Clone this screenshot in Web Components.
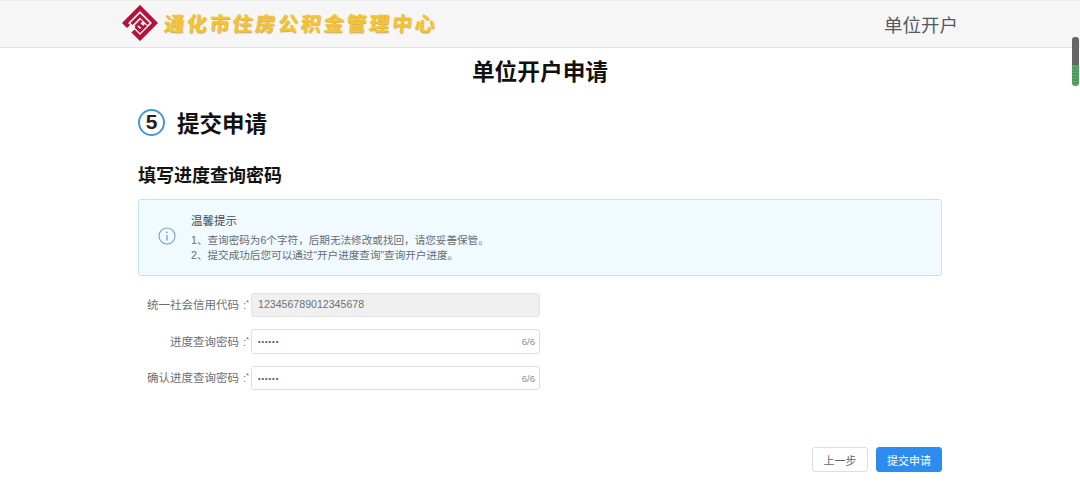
<!DOCTYPE html>
<html lang="zh">
<head>
<meta charset="utf-8">
<title>单位开户申请</title>
<style>
  html, body { margin: 0; height: 487px; overflow: hidden; background: #fff; }
  body { font-family: "Liberation Sans", "Noto Sans CJK SC", sans-serif; color: #17233d; }
</style>
</head>
<body>
<app-header org="通化市住房公积金管理中心" page="单位开户"></app-header>
<page-title>单位开户申请</page-title>
<main-wrap>
  <step-title num="5">提交申请</step-title>
  <section-title>填写进度查询密码</section-title>
  <tip-box heading="温馨提示">
    <div>1、查询密码为6个字符，后期无法修改或找回，请您妥善保管。</div>
    <div>2、提交成功后您可以通过“开户进度查询”查询开户进度。</div>
  </tip-box>
  <form-area>
    <form-row label="统一社会信用代码" value="123456789012345678" disabled></form-row>
    <form-row label="进度查询密码" value="••••••" count="6/6" masked></form-row>
    <form-row label="确认进度查询密码" value="••••••" count="6/6" masked></form-row>
  </form-area>
  <btn-bar>
    <x-btn>上一步</x-btn>
    <x-btn primary>提交申请</x-btn>
  </btn-bar>
</main-wrap>
<fake-scroll></fake-scroll>

<script>
class AppHeader extends HTMLElement {
    constructor() {
        super();
        this.attachShadow({ mode: 'open' });
        this.shadowRoot.innerHTML = `
        <style>
        :host { display: flex; align-items: center; justify-content: space-between; box-sizing: border-box;
            height: 48px; padding: 0 122px; background: #f6f6f6; border-top: 1px solid #ededed; border-bottom: 1px solid #e4e4e4; }
        .brand { display: flex; align-items: center; gap: 6px; margin-top: -2px; }
        .brand svg { display: block; }
        .org { font: 700 20px/1 "Noto Sans CJK SC", sans-serif; letter-spacing: 2.8px; color: #f6c42c;
            text-shadow: 1px 1px 1px #c9a56a; transform: skewX(-6deg); }
        .page { font-size: 18.500px; color: #55595f; }
        </style>
        <div class="brand">
            <svg width="36" height="36" viewBox="0 0 36 36" fill="none" stroke="#b3123c">
                <!-- outer ring, open on the lower left -->
                <path d="M6.500 21.500 L3 18 L18 3 L33 18 L18 33 L11 26" stroke-width="4.400"/>
                <!-- inner chevron and S -->
                <path d="M9.500 19 L18 10.500 L26.500 19" stroke-width="3"/>
                <path d="M13.500 21.500 L19.500 15.500 M13.500 21.500 L18 26 L24 20 M16.500 18.500 L21.500 23" stroke-width="2.800"/>
            </svg>
            <span class="org"></span>
        </div>
        <span class="page"></span>`;
        this.shadowRoot.querySelector('.org').textContent = this.getAttribute('org');
        this.shadowRoot.querySelector('.page').textContent = this.getAttribute('page');
    }
}

class PageTitle extends HTMLElement {
    constructor() {
        super();
        this.attachShadow({ mode: 'open' });
        this.shadowRoot.innerHTML = `
        <style>
        :host { display: block; text-align: center; font-size: 22.700px; line-height: 30px; font-weight: 700; color: #111;
            padding-top: 9px; }
        </style>
        <slot></slot>`;
    }
}

class MainWrap extends HTMLElement {
    constructor() {
        super();
        this.attachShadow({ mode: 'open' });
        this.shadowRoot.innerHTML = `
        <style>
        :host { display: block; width: 804px; margin-left: 138px; }
        </style>
        <slot></slot>`;
    }
}

class StepTitle extends HTMLElement {
    constructor() {
        super();
        this.attachShadow({ mode: 'open' });
        this.shadowRoot.innerHTML = `
        <style>
        :host { display: flex; align-items: center; gap: 12px; margin-top: 20px; height: 30px; font-size: 22.500px; font-weight: 700; color: #111; }
        .num { box-sizing: border-box; width: 27px; height: 27px; border: 2px solid #4a95d6; border-radius: 50%;
            display: flex; align-items: center; justify-content: center; font-size: 21px; font-weight: 700; color: #222; }
        </style>
        <span class="num"></span><slot></slot>`;
        this.shadowRoot.querySelector('.num').textContent = this.getAttribute('num');
    }
}

class SectionTitle extends HTMLElement {
    constructor() {
        super();
        this.attachShadow({ mode: 'open' });
        this.shadowRoot.innerHTML = `
        <style>
        :host { display: block; margin-top: 26px; font-size: 18px; line-height: 26px; font-weight: 700; color: #111; }
        </style>
        <slot></slot>`;
    }
}

class TipBox extends HTMLElement {
    constructor() {
        super();
        this.attachShadow({ mode: 'open' });
        this.shadowRoot.innerHTML = `
        <style>
        :host { display: flex; align-items: center; box-sizing: border-box; height: 77px; margin-top: 10px; padding: 0 0 0 19px;
            background: #f0faff; border: 1px solid #c3e6f5; border-radius: 3px; }
        svg { flex: none; margin-right: 15px; margin-top: -4px; }
        .text { padding-top: 1px; }
        .title { font-size: 11.500px; line-height: 16px; color: #444c58; margin-bottom: 4px; }
        .body { font-size: 10.600px; line-height: 15px; color: #666c75; }
        </style>
        <svg width="18" height="18" viewBox="0 0 18 18" fill="none" stroke="#6f9fdc">
            <circle cx="9" cy="9" r="8" stroke-width="1.100"/>
            <path d="M9 8 V13.500" stroke-width="1.300"/>
            <circle cx="9" cy="5.300" r=".9" fill="#6f9fdc" stroke="none"/>
        </svg>
        <div class="text">
            <div class="title"></div>
            <div class="body"><slot></slot></div>
        </div>`;
        this.shadowRoot.querySelector('.title').textContent = this.getAttribute('heading');
    }
}

class FormArea extends HTMLElement {
    constructor() {
        super();
        this.attachShadow({ mode: 'open' });
        this.shadowRoot.innerHTML = `
        <style>
        :host { display: flex; flex-direction: column; gap: 12px; margin-top: 16.900px; }
        </style>
        <slot></slot>`;
    }
}

class FormRow extends HTMLElement {
    constructor() {
        super();
        this.attachShadow({ mode: 'open' });
        this.shadowRoot.innerHTML = `
        <style>
        :host { display: flex; align-items: center; font-size: 11.500px; height: 24.500px; }
        .label { width: 101px; flex: none; text-align: right; color: #6b6f76; white-space: nowrap; padding-bottom: 2px; }
        /* star sits just right of the colon, raised to the colon's top dot */
        .mark { width: 12px; height: 14px; flex: none; display: flex; padding-left: 4px; box-sizing: border-box; }
        .colon { line-height: 14px; font-size: 11px; color: #77797c; }
        .star { line-height: 9px; font-size: 8px; color: #d0453f; }
        .box { box-sizing: border-box; width: 289px; height: 24.500px; display: flex; align-items: center; justify-content: space-between;
            padding: 0 4px 2px 6px; border: 1px solid #dcdee2; border-radius: 3px; background: #fff; color: #5c5f64; font-size: 10.600px; }
        .box.off { background: #f0f0f0; color: #6e7074; border-color: #e3e3e3; }
        .box.masked { padding-bottom: 0; }
        .box.masked .val { font-size: 7.500px; letter-spacing: .9px; color: #555; }
        .count { font-size: 9.500px; color: #8a8d92; }
        </style>
        <span class="label"></span>
        <span class="mark"><span class="colon">:</span><span class="star">*</span></span>
        <div class="box"><span class="val"></span><span class="count"></span></div>`;
        const root = this.shadowRoot;
        root.querySelector('.label').textContent = this.getAttribute('label');
        root.querySelector('.val').textContent = this.getAttribute('value');
        root.querySelector('.count').textContent = this.getAttribute('count') || '';
        if (this.hasAttribute('disabled')) root.querySelector('.box').classList.add('off');
        if (this.hasAttribute('masked')) root.querySelector('.box').classList.add('masked');
    }
}

class BtnBar extends HTMLElement {
    constructor() {
        super();
        this.attachShadow({ mode: 'open' });
        this.shadowRoot.innerHTML = `
        <style>
        :host { display: flex; justify-content: flex-end; gap: 8px; margin-top: 57px; }
        </style>
        <slot></slot>`;
    }
}

class XBtn extends HTMLElement {
    constructor() {
        super();
        this.attachShadow({ mode: 'open' });
        this.shadowRoot.innerHTML = `
        <style>
        :host { display: flex; align-items: center; justify-content: center; box-sizing: border-box; height: 25px; width: 56px;
            font-size: 11px; border: 1px solid #dcdee2; border-radius: 3px; background: #fff; color: #62666c; }
        :host([primary]) { width: 66px; background: #2d8cf0; border-color: #2d8cf0; color: #fff; }
        </style>
        <slot></slot>`;
    }
}

class FakeScroll extends HTMLElement {
    constructor() {
        super();
        this.attachShadow({ mode: 'open' });
        this.shadowRoot.innerHTML = `
        <style>
        :host { position: absolute; left: 1072px; top: 37px; width: 7px; height: 49px; border-radius: 3px; overflow: hidden;
            background: linear-gradient(#666 0 28px, transparent 28px), repeating-linear-gradient(#4d9a5c 0 2px, #5fa86c 2px 3px); }
        </style>`;
    }
}

customElements.define('app-header', AppHeader);
customElements.define('page-title', PageTitle);
customElements.define('main-wrap', MainWrap);
customElements.define('step-title', StepTitle);
customElements.define('section-title', SectionTitle);
customElements.define('tip-box', TipBox);
customElements.define('form-area', FormArea);
customElements.define('form-row', FormRow);
customElements.define('btn-bar', BtnBar);
customElements.define('x-btn', XBtn);
customElements.define('fake-scroll', FakeScroll);
</script>
</body>
</html>
